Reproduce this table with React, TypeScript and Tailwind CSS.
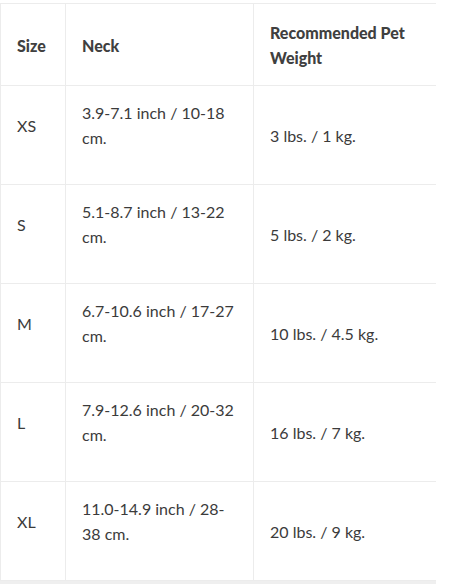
/**
 * Size chart table: size, neck and recommended pet weight.
 */

interface SizeRow {
  size: string;
  neck: string;
  weight: string;
}

const rows: SizeRow[] = [
  { size: 'XS', neck: '3.9-7.1 inch / 10-18 cm.', weight: '3 lbs. / 1 kg.' },
  { size: 'S', neck: '5.1-8.7 inch / 13-22 cm.', weight: '5 lbs. / 2 kg.' },
  { size: 'M', neck: '6.7-10.6 inch / 17-27 cm.', weight: '10 lbs. / 4.5 kg.' },
  { size: 'L', neck: '7.9-12.6 inch / 20-32 cm.', weight: '16 lbs. / 7 kg.' },
  { size: 'XL', neck: '11.0-14.9 inch / 28-38 cm.', weight: '20 lbs. / 9 kg.' },
];

const cell = 'border border-[#ececec] px-4 py-[14px] align-middle';
const head = 'border border-[#ececec] px-4 pt-4 pb-[15px] align-middle text-left font-black text-[#404040]';

export default function App() {
  return (
    <div className="min-h-[584px] bg-white pt-[3px] font-['Lato',sans-serif] text-[16px] leading-[25px] text-[#3b3b3b]">
      <div className="w-[436px] border-b-[3px] border-[#efefef]">
        <table className="w-full table-fixed border-collapse">
          <colgroup>
            <col className="w-[65px]" />
            <col className="w-[188px]" />
            <col />
          </colgroup>
          <thead>
            <tr>
              <th className={head}>Size</th>
              <th className={head}>Neck</th>
              <th className={`${head} border-r-0`}>Recommended Pet Weight</th>
            </tr>
          </thead>
          <tbody>
            {rows.map((r) => (
              <tr key={r.size} className="h-[99px]">
                <td className={cell}>
                  <p className="mb-5">{r.size}</p>
                </td>
                <td className={cell}>
                  <p className="mb-5">{r.neck}</p>
                </td>
                <td className={`${cell} border-r-0`}>{r.weight}</td>
              </tr>
            ))}
          </tbody>
        </table>
      </div>
    </div>
  );
}
